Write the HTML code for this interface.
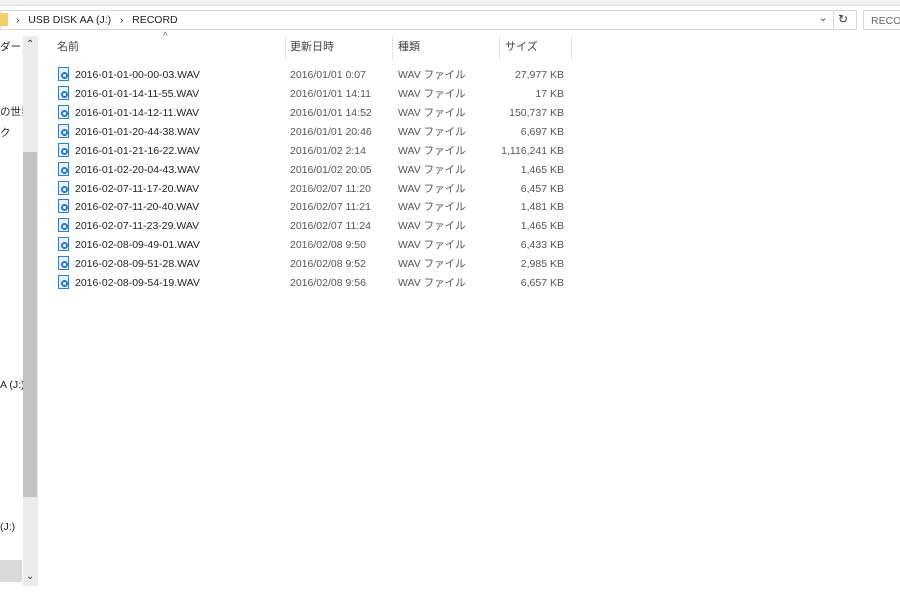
<!DOCTYPE html>
<html><head><meta charset="utf-8"><style>
*{margin:0;padding:0;box-sizing:border-box}
body{width:900px;height:600px;background:#fff;position:relative;overflow:hidden;font-family:"Liberation Sans","Noto Sans CJK JP",sans-serif;font-size:10.5px;line-height:14px;color:#222}
.a{position:absolute;white-space:nowrap}
.row{position:absolute;left:0;height:18px;width:600px}
.row div{line-height:14px;height:14px}
.ic{position:absolute;left:58px;top:2px;width:11px;height:14px;border:1px solid #3a7bc8;background:#eaf3fb}
.ic:after{content:"";position:absolute;left:2px;top:4px;width:5px;height:5px;border-radius:50%;border:1px solid #1f6fc5;background:#fff;box-shadow:inset 0 0 0 1px #1f6fc5}
.n{position:absolute;left:75px;top:3px}
.d{position:absolute;left:290px;top:3px;color:#555}
.t{position:absolute;left:398px;top:3px;color:#555}
.s{position:absolute;right:36px;top:3px;color:#555;text-align:right}
.hd{position:absolute;top:40px;color:#444;font-size:11px}
.sep{position:absolute;top:36px;width:1px;height:24px;background:#e5e5e5}
</style></head><body>
<div class="a" style="left:0;top:0;width:900px;height:6px;background:#f3f3f3;border-bottom:1px solid #e0e0e0"></div>
<div class="a" style="left:0;top:10px;width:857px;height:20px;border:1px solid #d9d9d9"></div>
<div class="a" style="left:0;top:13px;width:8px;height:13px;background:#f2cf67"></div>
<div class="a" style="left:16px;top:13px;font-size:10.5px">›&nbsp;&nbsp; USB DISK AA (J:) &nbsp;&nbsp;›&nbsp;&nbsp; RECORD</div>
<div class="a" style="left:819px;top:12px;font-size:10px;color:#333">⌄</div>
<div class="a" style="left:833px;top:10px;width:1px;height:20px;background:#d9d9d9"></div>
<div class="a" style="left:838px;top:12px;font-size:12px;color:#333">↻</div>
<div class="a" style="left:863px;top:10px;width:40px;height:20px;border:1px solid #d9d9d9"></div>
<div class="a" style="left:871px;top:14px;color:#666">RECORD</div>
<div class="a" style="left:0;top:40px">ダー<span style="color:#999">📌</span></div>
<div class="a" style="left:0;top:105px">の世界</div>
<div class="a" style="left:0;top:126px">ク</div>
<div class="a" style="left:0;top:378px">A (J:)</div>
<div class="a" style="left:0;top:520px">(J:)</div>
<div class="a" style="left:0;top:560px;width:22px;height:22px;background:#d9d9d9"></div>
<div class="a" style="left:23px;top:36px;width:14px;height:550px;background:#ececec"></div>
<div class="a" style="left:23px;top:152px;width:14px;height:345px;background:#c2c2c2"></div>
<div class="a" style="left:26px;top:38px;font-size:10px;color:#333">⌃</div>
<div class="a" style="left:26px;top:570px;font-size:10px;color:#333">⌄</div>
<div class="a" style="left:37px;top:36px;width:1px;height:550px;background:#e8e8e8"></div>
<div class="a" style="left:163px;top:30px;font-size:10px;color:#777">^</div>
<div class="hd" style="left:57px">名前</div>
<div class="sep" style="left:285px"></div>
<div class="hd" style="left:290px">更新日時</div>
<div class="sep" style="left:392px"></div>
<div class="hd" style="left:398px">種類</div>
<div class="sep" style="left:499px"></div>
<div class="hd" style="left:505px">サイズ</div>
<div class="sep" style="left:571px"></div>
<div class="row" style="top:65px"><div class="ic"></div><div class="n">2016-01-01-00-00-03.WAV</div><div class="d">2016/01/01 0:07</div><div class="t">WAV ファイル</div><div class="s">27,977 KB</div></div>
<div class="row" style="top:84px"><div class="ic"></div><div class="n">2016-01-01-14-11-55.WAV</div><div class="d">2016/01/01 14:11</div><div class="t">WAV ファイル</div><div class="s">17 KB</div></div>
<div class="row" style="top:103px"><div class="ic"></div><div class="n">2016-01-01-14-12-11.WAV</div><div class="d">2016/01/01 14:52</div><div class="t">WAV ファイル</div><div class="s">150,737 KB</div></div>
<div class="row" style="top:122px"><div class="ic"></div><div class="n">2016-01-01-20-44-38.WAV</div><div class="d">2016/01/01 20:46</div><div class="t">WAV ファイル</div><div class="s">6,697 KB</div></div>
<div class="row" style="top:141px"><div class="ic"></div><div class="n">2016-01-01-21-16-22.WAV</div><div class="d">2016/01/02 2:14</div><div class="t">WAV ファイル</div><div class="s">1,116,241 KB</div></div>
<div class="row" style="top:160px"><div class="ic"></div><div class="n">2016-01-02-20-04-43.WAV</div><div class="d">2016/01/02 20:05</div><div class="t">WAV ファイル</div><div class="s">1,465 KB</div></div>
<div class="row" style="top:179px"><div class="ic"></div><div class="n">2016-02-07-11-17-20.WAV</div><div class="d">2016/02/07 11:20</div><div class="t">WAV ファイル</div><div class="s">6,457 KB</div></div>
<div class="row" style="top:197px"><div class="ic"></div><div class="n">2016-02-07-11-20-40.WAV</div><div class="d">2016/02/07 11:21</div><div class="t">WAV ファイル</div><div class="s">1,481 KB</div></div>
<div class="row" style="top:216px"><div class="ic"></div><div class="n">2016-02-07-11-23-29.WAV</div><div class="d">2016/02/07 11:24</div><div class="t">WAV ファイル</div><div class="s">1,465 KB</div></div>
<div class="row" style="top:235px"><div class="ic"></div><div class="n">2016-02-08-09-49-01.WAV</div><div class="d">2016/02/08 9:50</div><div class="t">WAV ファイル</div><div class="s">6,433 KB</div></div>
<div class="row" style="top:254px"><div class="ic"></div><div class="n">2016-02-08-09-51-28.WAV</div><div class="d">2016/02/08 9:52</div><div class="t">WAV ファイル</div><div class="s">2,985 KB</div></div>
<div class="row" style="top:273px"><div class="ic"></div><div class="n">2016-02-08-09-54-19.WAV</div><div class="d">2016/02/08 9:56</div><div class="t">WAV ファイル</div><div class="s">6,657 KB</div></div>
</body></html>
